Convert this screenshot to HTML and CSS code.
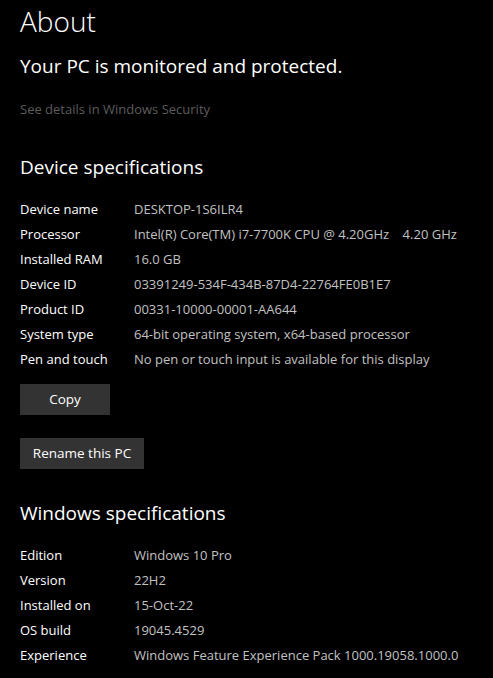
FILE: index.html
```html
<!DOCTYPE html>
<html>
<head lang="en">
    <meta charset="UTF-8">
    <title>About</title>

    <link rel="stylesheet" href="styles.css">

</head>
<body>

    <div id="page">
        <h1 class="title">About</h1>

        <div class="status">Your PC is monitored and protected.</div>
        <div class="link">See details in Windows Security</div>

        <!-- 设备规格 -->
        <h2 class="section">Device specifications</h2>
        <div class="specs">
            <div class="row"><span class="key">Device name</span><span class="val">DESKTOP-1S6ILR4</span></div>
            <div class="row"><span class="key">Processor</span><span class="val">Intel(R) Core(TM) i7-7700K CPU @ 4.20GHz&nbsp;&nbsp;&nbsp;&nbsp;4.20 GHz</span></div>
            <div class="row"><span class="key">Installed RAM</span><span class="val">16.0 GB</span></div>
            <div class="row"><span class="key">Device ID</span><span class="val">03391249-534F-434B-87D4-22764FE0B1E7</span></div>
            <div class="row"><span class="key">Product ID</span><span class="val">00331-10000-00001-AA644</span></div>
            <div class="row"><span class="key">System type</span><span class="val">64-bit operating system, x64-based processor</span></div>
            <div class="row"><span class="key">Pen and touch</span><span class="val">No pen or touch input is available for this display</span></div>
        </div>

        <div class="btn btn-copy">Copy</div>
        <div class="btn btn-rename">Rename this PC</div>

        <!-- Windows 规格 -->
        <h2 class="section win">Windows specifications</h2>
        <div class="specs win-specs">
            <div class="row"><span class="key">Edition</span><span class="val">Windows 10 Pro</span></div>
            <div class="row"><span class="key">Version</span><span class="val">22H2</span></div>
            <div class="row"><span class="key">Installed on</span><span class="val">15-Oct-22</span></div>
            <div class="row"><span class="key">OS build</span><span class="val">19045.4529</span></div>
            <div class="row"><span class="key">Experience</span><span class="val">Windows Feature Experience Pack 1000.19058.1000.0</span></div>
        </div>
    </div>

</body>
</html>
```

FILE: styles.css
```css
*{
    margin: 0px;
    padding: 0px;
}

body{
    background: #000;
    color: #fff;
    font-family: "Open Sans", "Noto Sans", sans-serif;
}

#page{
    width: 493px;
    height: 678px;
    padding: 0 20px;
    box-sizing: border-box;
    overflow: hidden;
}

.title{
    font-size: 28px;
    font-weight: 300;
    line-height: 40px;
    margin-top: 1px;
}

.status{
    font-size: 19px;
    line-height: 28px;
    margin-top: 11px;
}

.link{
    font-size: 13px;
    line-height: 20px;
    margin-top: 19px;
    color: #5c5c5c;
}

.section{
    font-size: 19px;
    font-weight: 400;
    line-height: 28px;
    margin-top: 34px;
}

.specs{
    margin-top: 16px;
}

.row{
    display: flex;
    height: 25px;
    line-height: 25px;
    font-size: 13px;
}

.key{
    width: 114px;
    flex-shrink: 0;
}

.val{
    color: #c2c2c2;
    white-space: nowrap;
}

.btn{
    background: #333;
    font-size: 13.5px;
    height: 31px;
    line-height: 31px;
    text-align: center;
}

.btn-copy{
    width: 90px;
    margin-top: 12px;
}

.btn-rename{
    width: 124px;
    margin-top: 23px;
}

.section.win{
    margin-top: 30px;
}

.win-specs{
    margin-top: 16px;
}
```
